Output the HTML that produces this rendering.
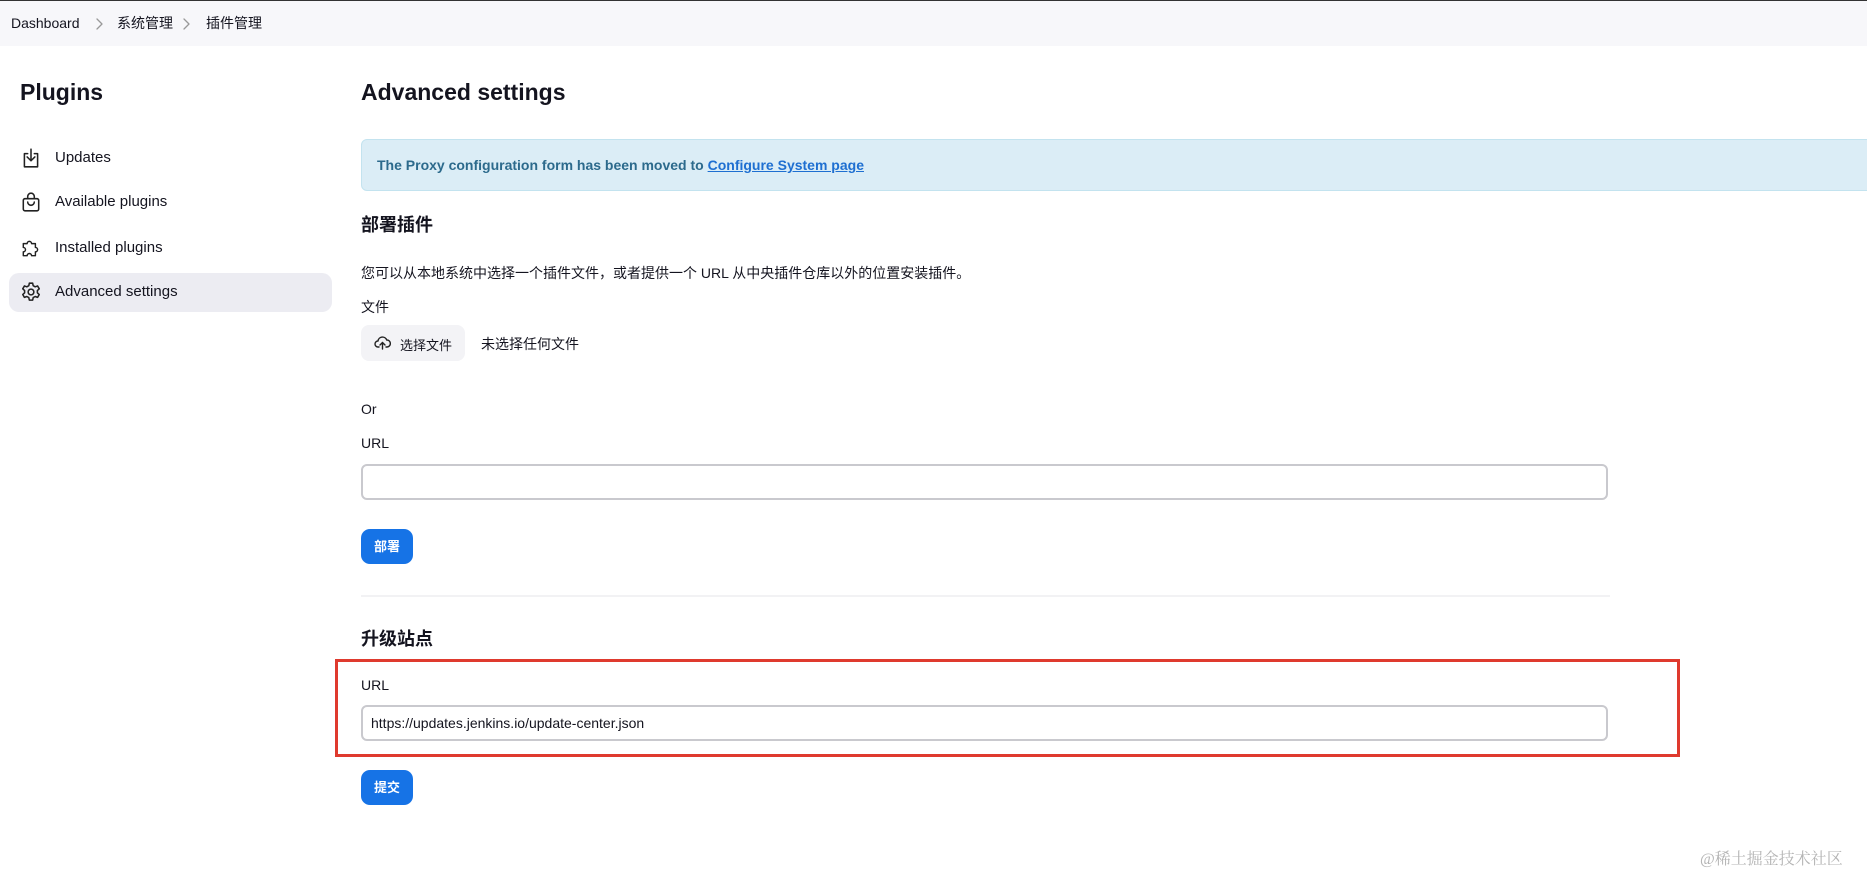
<!DOCTYPE html>
<html><head><meta charset="utf-8"><style>
*{box-sizing:border-box;margin:0;padding:0}
body{width:1867px;height:874px;overflow:hidden;background:#fff;font-family:"Liberation Sans","Noto Sans CJK SC",sans-serif;color:#14141f;position:relative}
.abs{position:absolute;white-space:nowrap}
.hdr{position:absolute;left:0;top:0;width:1867px;height:46px;background:#f7f7fa;border-top:1px solid #333}
.bc{font-size:14px;top:15px;line-height:16px}
.chev{position:absolute;top:17px}
h1{position:absolute;font-size:23px;font-weight:bold;top:79px}
.item{position:absolute;left:55px;font-size:15px}
.ic{position:absolute;left:20px;width:22px;height:22px}
.hl{position:absolute;left:9px;top:273px;width:323px;height:39px;background:#ececf2;border-radius:10px}
.alert{position:absolute;left:361px;top:139px;width:1520px;height:52px;background:#dbedf6;border:1px solid #c3e3ef;border-radius:6px}
.alert span{position:absolute;left:15px;top:17px;font-size:14px;font-weight:bold;color:#2c6a8c;white-space:nowrap}
.alert a{color:#1e6fd1;text-decoration:underline}
h3{position:absolute;font-size:18px;font-weight:bold;left:361px}
.t{position:absolute;left:361px;font-size:14px;white-space:nowrap}
.inp{position:absolute;left:361px;width:1247px;height:36px;border:2px solid #c9c9ce;border-radius:6px;background:#fff}
.btn{position:absolute;left:361px;width:52px;height:35px;background:#1673e6;border-radius:9px;color:#fff;font-weight:bold;font-size:13px;text-align:center;line-height:35px}
</style></head><body>
<div class="hdr"></div>
<div class="abs bc" style="left:11px">Dashboard</div>
<svg class="chev" style="left:95px" width="8" height="14" viewBox="0 0 8 14" fill="none" stroke="#999" stroke-width="1.3" stroke-linecap="round" stroke-linejoin="round"><path d="M2 2l5 5-5 5"/></svg>
<div class="abs bc" style="left:117px">系统管理</div>
<svg class="chev" style="left:182px" width="8" height="14" viewBox="0 0 8 14" fill="none" stroke="#999" stroke-width="1.3" stroke-linecap="round" stroke-linejoin="round"><path d="M2 2l5 5-5 5"/></svg>
<div class="abs bc" style="left:206px">插件管理</div>

<h1 style="left:20px">Plugins</h1>
<h1 style="left:361px">Advanced settings</h1>

<div class="hl"></div>
<svg class="ic" style="top:147px" viewBox="0 0 20 20" fill="none" stroke="#222" stroke-width="1.4" stroke-linecap="round" stroke-linejoin="round"><path d="M7 6H4v12h12V6h-3"/><path d="M10 2v10M6.5 9l3.5 3.5L13.5 9"/></svg>
<div class="item" style="top:149px">Updates</div>
<svg class="ic" style="top:191px" viewBox="0 0 20 20" fill="none" stroke="#222" stroke-width="1.4" stroke-linecap="round" stroke-linejoin="round"><rect x="3" y="7" width="14" height="11" rx="1.5"/><path d="M7 7V5a3 3 0 0 1 6 0v2"/><path d="M7 10a3 3 0 0 0 6 0"/></svg>
<div class="item" style="top:193px">Available plugins</div>
<svg class="ic" style="top:237px" viewBox="0 0 20 20" fill="none" stroke="#222" stroke-width="1.3" stroke-linejoin="round"><path d="M3 6h3.5a2 2 0 1 1 4 0H14v3.5a2 2 0 1 1 0 4V17h-3.5a2 2 0 1 0-4 0H3v-3.5a2 2 0 1 0 0-4z"/></svg>
<div class="item" style="top:239px">Installed plugins</div>
<svg class="ic" style="top:281px" viewBox="0 0 20 20" fill="none" stroke="#222" stroke-width="1.4" stroke-linejoin="round"><path d="M8.5 2h3l.5 2.3 1.8 1 2.2-.8 1.5 2.6-1.7 1.6v2l1.7 1.6-1.5 2.6-2.2-.8-1.8 1-.5 2.3h-3l-.5-2.3-1.8-1-2.2.8-1.5-2.6 1.7-1.6v-2L2.5 7.1 4 4.5l2.2.8 1.8-1z"/><circle cx="10" cy="10" r="2.6"/></svg>
<div class="item" style="top:283px">Advanced settings</div>

<div class="alert"><span>The Proxy configuration form has been moved to <a>Configure System page</a></span></div>

<h3 style="top:211px">部署插件</h3>
<div class="t" style="top:263px">您可以从本地系统中选择一个插件文件，或者提供一个 URL 从中央插件仓库以外的位置安装插件。</div>
<div class="t" style="top:297px">文件</div>
<div style="position:absolute;left:361px;top:325px;width:104px;height:36px;background:#f3f3f6;border-radius:8px"></div>
<svg style="position:absolute;left:374px;top:335px" width="17" height="15" viewBox="0 0 17 15" fill="none" stroke="#222" stroke-width="1.4" stroke-linecap="round" stroke-linejoin="round"><path d="M5 12H4a3 3 0 0 1 0-6 4.5 4.5 0 0 1 8.7-1A3.3 3.3 0 0 1 13 12h-1"/><path d="M8.5 14V7.5M6 10l2.5-2.5L11 10"/></svg>
<div class="abs" style="left:400px;top:335px;font-size:13px">选择文件</div>
<div class="abs" style="left:481px;top:334px;font-size:14px">未选择任何文件</div>

<div class="t" style="top:401px">Or</div>
<div class="t" style="top:435px">URL</div>
<div class="inp" style="top:464px"></div>
<div class="btn" style="top:529px">部署</div>

<div style="position:absolute;left:361px;top:595px;width:1249px;height:2px;background:#f2f2f4"></div>

<h3 style="top:625px">升级站点</h3>
<div style="position:absolute;left:335px;top:659px;width:1345px;height:98px;border:3px solid #df3a2e"></div>
<div class="t" style="top:677px">URL</div>
<div class="inp" style="top:705px"><span style="position:absolute;left:8px;top:8px;font-size:14px">https://updates.jenkins.io/update-center.json</span></div>
<div class="btn" style="top:770px">提交</div>

<div class="abs" style="left:1700px;top:846px;font-size:16px;color:#b4b4b4;font-family:'Liberation Serif','Noto Serif CJK SC',serif">@稀土掘金技术社区</div>
</body></html>
